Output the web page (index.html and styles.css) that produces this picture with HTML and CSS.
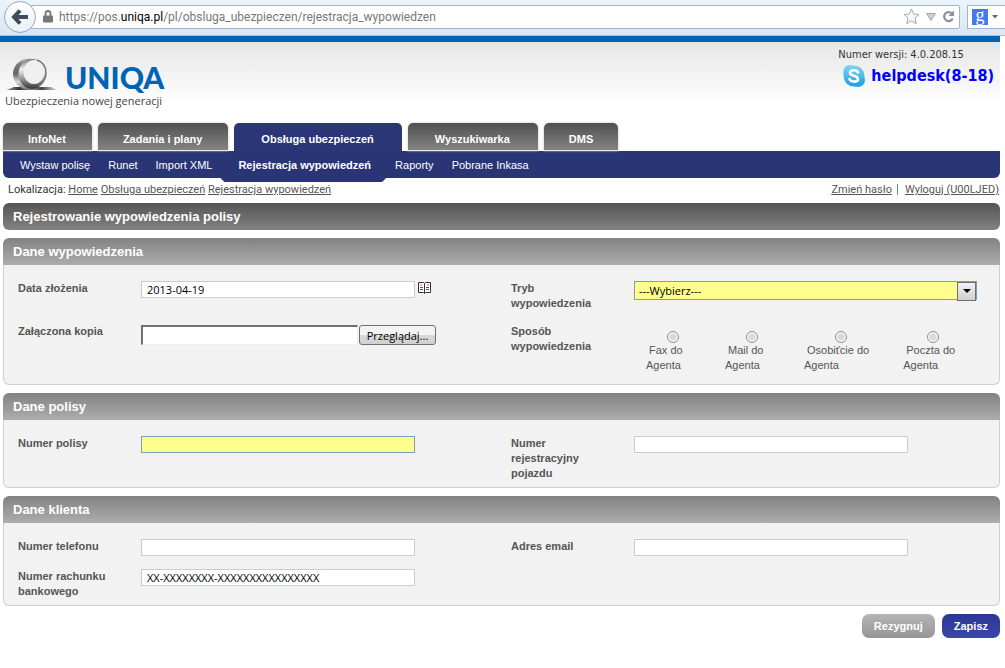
FILE: index.html
```html
<!DOCTYPE html>
<html lang="pl">
<head>
<meta charset="utf-8">
<title>UNIQA - Rejestracja wypowiedzeń</title>
<link rel="stylesheet" href="styles.css">
</head>
<body>
<div class="toolbar">
  <button class="back" type="button" aria-label="Wstecz">
    <svg width="18" height="18" viewBox="0 0 18 18"><path d="M9 2.500 L3 9 L9 15.500 M3 9 H17" fill="none" stroke="#3f4d5e" stroke-width="4"/></svg>
  </button>
  <div class="urlbar">
    <svg class="lock" width="10" height="13" viewBox="0 0 10 13"><path d="M2.500 6 V3.500 A2.500 2.500 0 0 1 7.500 3.500 V6" fill="none" stroke="#777" stroke-width="1.800"/><rect x="0" y="5.500" width="10" height="7" rx="1" fill="#777"/></svg>
    <span class="url">https://pos.<b>uniqa.pl</b>/pl/obsluga_ubezpieczen/rejestracja_wypowiedzen</span>
    <svg width="17" height="17" viewBox="0 0 17 17"><path d="M8.500 1 L10.700 6 L16 6.500 L12 10.200 L13.200 15.700 L8.500 12.900 L3.800 15.700 L5 10.200 L1 6.500 L6.300 6 Z" fill="#f6f7f8" stroke="#a3a9af"/></svg>
    <svg width="10" height="8" viewBox="0 0 10 8"><path d="M.5 .5 H9.500 L5 7.500 Z" fill="#cdd2d8" stroke="#a3abb5"/></svg>
    <svg width="13" height="13" viewBox="0 0 13 13"><path d="M10 3.600 A4.500 4.500 0 1 0 10.700 8.500" fill="none" stroke="#87919d" stroke-width="2.200"/><path d="M12 .5 V6 H6.500 Z" fill="#87919d"/></svg>
  </div>
  <div class="search">
    <span class="google">g</span>
    <svg width="6" height="4" viewBox="0 0 6 4"><path d="M0 0 H6 L3 3.500 Z" fill="#666"/></svg>
  </div>
</div>

<div class="page">
  <header class="header">
    <div class="brand">
      <div class="brand-row">
        <svg width="53" height="34" viewBox="0 0 53 34">
          <defs>
            <linearGradient id="band" x1="0" y1="0" x2="0" y2="1"><stop offset="0" stop-color="#bbb"/><stop offset=".2" stop-color="#777"/><stop offset=".5" stop-color="#666"/><stop offset=".75" stop-color="#d8d8d8"/><stop offset="1" stop-color="#777"/></linearGradient>
            <linearGradient id="inner" x1="0" y1="0" x2="0" y2="1"><stop offset="0" stop-color="#777"/><stop offset=".35" stop-color="#eee"/><stop offset=".65" stop-color="#999"/><stop offset="1" stop-color="#333"/></linearGradient>
            <linearGradient id="base" x1="0" y1="0" x2="1" y2="0"><stop offset="0" stop-color="#aaa"/><stop offset=".25" stop-color="#333"/><stop offset=".5" stop-color="#888"/><stop offset=".7" stop-color="#444"/><stop offset="1" stop-color="#ddd"/></linearGradient>
          </defs>
          <path d="M1 32 L9 29 H46 L52 32 Z" fill="url(#base)"/>
          <ellipse cx="24" cy="16" rx="16" ry="15.500" fill="url(#band)"/>
          <ellipse cx="27" cy="16" rx="13.500" ry="15" fill="url(#inner)"/>
          <ellipse cx="29" cy="14" rx="10.500" ry="12" fill="#efefef"/>
          <path d="M32 2 C38 4 41 9 41 15 C41 20 38 25 34 28" fill="none" stroke="#777" stroke-width="1.500"/>
        </svg>
        <strong class="logo">UNIQA</strong>
      </div>
      <div class="tagline">Ubezpieczenia nowej generacji</div>
    </div>
    <div class="support">
      <div class="version">Numer wersji: 4.0.208.15</div>
      <a class="helpdesk" href="#">
        <svg width="24" height="24" viewBox="0 0 24 24"><defs><linearGradient id="sky" x1="0" y1="0" x2="0" y2="1"><stop offset="0" stop-color="#7fd6f5"/><stop offset="1" stop-color="#1a9fdc"/></linearGradient></defs><circle cx="8" cy="8" r="7" fill="#74cff2"/><circle cx="16" cy="16" r="7" fill="#2aa8e0"/><circle cx="12" cy="12" r="10.500" fill="url(#sky)"/><path d="M16 8.500 C15 5.500 8 5.500 8 9 C8 12.500 16 11 16 15 C16 18.500 8.500 18.500 7.500 15" fill="none" stroke="#fff" stroke-width="2.600" stroke-linecap="round"/></svg>
        <span>helpdesk(8-18)</span>
      </a>
    </div>
  </header>

  <nav class="tabs">
    <a href="#">InfoNet</a>
    <a href="#">Zadania i plany</a>
    <a href="#" class="wide active">Obsługa ubezpieczeń</a>
    <a href="#" class="wide">Wyszukiwarka</a>
    <a href="#">DMS</a>
  </nav>
  <nav class="subnav">
    <a href="#">Wystaw polisę</a>
    <a href="#">Runet</a>
    <a href="#">Import XML</a>
    <a href="#" class="active">Rejestracja wypowiedzeń</a>
    <a href="#">Raporty</a>
    <a href="#">Pobrane Inkasa</a>
  </nav>

  <div class="location">
    <div>Lokalizacja: <a href="#">Home</a> <a href="#">Obsługa ubezpieczeń</a> <a href="#">Rejestracja wypowiedzeń</a></div>
    <div class="account"><a href="#">Zmień hasło</a><span class="bar"></span><a href="#">Wyloguj (U00LJED)</a></div>
  </div>

  <form class="form">
    <h1 class="title">Rejestrowanie wypowiedzenia polisy</h1>

    <section class="panel">
      <h2>Dane wypowiedzenia</h2>
      <div class="fields">
        <div class="field">
          <label for="date">Data złożenia</label>
          <div class="control">
            <input class="text" id="date" type="text" value="2013-04-19">
            <svg width="13" height="14" viewBox="0 0 13 14"><path d="M.5 1.500 H5.500 L6.500 2.500 L7.500 1.500 H12.500 V11.500 H7.500 L6.500 12.500 L5.500 11.500 H.5 Z M6.500 2.500 V12" fill="#fff" stroke="#333"/><path d="M2 6.500 H5 M2 8.500 H5 M8 6.500 H11 M8 8.500 H11" stroke="#555"/><path d="M2 4 H4 M9 4 H11" stroke="#e0602a"/></svg>
          </div>
        </div>
        <div class="field">
          <label for="mode">Tryb wypowiedzenia</label>
          <div class="control"><div class="select"><select id="mode"><option>---Wybierz---</option></select></div></div>
        </div>
        <div class="field">
          <label for="copy">Załączona kopia</label>
          <div class="control file"><input id="copy" type="text"><button type="button">Przeglądaj...</button></div>
        </div>
        <div class="field">
          <span class="label" id="way">Sposób wypowiedzenia</span>
          <div class="radios" role="radiogroup" aria-labelledby="way">
            <label><input type="radio" name="way"><span>Fax do<br>Agenta</span></label>
            <label><input type="radio" name="way"><span>Mail do<br>Agenta</span></label>
            <label><input type="radio" name="way"><span>Osobiťcie do<br>Agenta</span></label>
            <label><input type="radio" name="way"><span>Poczta do<br>Agenta</span></label>
          </div>
        </div>
      </div>
    </section>

    <section class="panel">
      <h2>Dane polisy</h2>
      <div class="fields">
        <div class="field">
          <label for="policy">Numer polisy</label>
          <div class="control"><input class="text required" id="policy" type="text"></div>
        </div>
        <div class="field">
          <label for="plate">Numer rejestracyjny pojazdu</label>
          <div class="control"><input class="text" id="plate" type="text"></div>
        </div>
      </div>
    </section>

    <section class="panel">
      <h2>Dane klienta</h2>
      <div class="fields">
        <div class="field">
          <label for="phone">Numer telefonu</label>
          <div class="control"><input class="text" id="phone" type="text"></div>
        </div>
        <div class="field">
          <label for="email">Adres email</label>
          <div class="control"><input class="text" id="email" type="text"></div>
        </div>
        <div class="field">
          <label for="account">Numer rachunku bankowego</label>
          <div class="control"><input class="text" id="account" type="text" value="XX-XXXXXXXX-XXXXXXXXXXXXXXXX"></div>
        </div>
      </div>
    </section>

    <div class="actions">
      <button type="button" class="cancel">Rezygnuj</button>
      <button type="button" class="save">Zapisz</button>
    </div>
  </form>
</div>
</body>
</html>
```
FILE: styles.css
```css
* { box-sizing: border-box; }
body {
  margin: 0;
  background: #fff;
  color: #333;
  font: 11px/15px "Liberation Sans", Arial, sans-serif;
  overflow-x: hidden;
}
svg { display: block; flex: none; }

.toolbar {
  display: flex;
  align-items: center;
  height: 36px;
  padding: 0 0 2px 4px;
  background: linear-gradient(#ecf4fd, #d9e6f5);
  border-bottom: 1px solid #b5bfca;
  overflow: hidden;
}
.back {
  display: flex;
  align-items: center;
  justify-content: center;
  flex: none;
  z-index: 1;
  width: 32px;
  height: 32px;
  padding: 0;
  border: 1px solid #9aa9bc;
  border-radius: 50%;
  background: linear-gradient(#fff, #e9f0f8);
}
.urlbar {
  display: flex;
  align-items: center;
  flex: 1;
  gap: 6px;
  height: 24px;
  margin-left: -6px;
  padding: 0 4px 0 12px;
  border: 1px solid #a3b4c9;
  border-radius: 2px;
  background: #fff;
}
.url {
  flex: 1;
  font: 12px/16px Roboto, sans-serif;
  color: #777;
  white-space: nowrap;
}
.url b { font-weight: 400; color: #000; }
.search {
  display: flex;
  align-items: center;
  flex: none;
  gap: 4px;
  width: 38px;
  height: 24px;
  margin-left: 7px;
  padding-left: 4px;
  border: 1px solid #a3b4c9;
  border-right: 0;
  background: #fff;
}
.google {
  width: 16px;
  height: 16px;
  background: #4778ee;
  color: #fff;
  font: 18px/12px "Liberation Serif", serif;
  text-align: center;
}

.page { margin-right: 5px; }
.header {
  display: flex;
  justify-content: space-between;
  height: 87px;
  padding: 6px 6px 0 5px;
  border-top: 6px solid #0064b4;
  background: linear-gradient(#e6e6e6, #fff 62px);
}
.brand { padding-top: 9px; }
.brand-row { display: flex; align-items: flex-end; gap: 7px; height: 35px; }
.logo {
  color: #0064b4;
  font: 900 30px/30px Lato, sans-serif;
}
.tagline { padding-top: 1px; font: 11px/16px "Open Sans", sans-serif; color: #444; }
.version {
  font: 11px/14px "DejaVu Sans Condensed", "DejaVu Sans", sans-serif;
}
.helpdesk {
  display: flex;
  align-items: center;
  gap: 5px;
  padding: 2px 0 0 4px;
  color: #00f;
  font: bold 16px/24px "DejaVu Sans Condensed", "DejaVu Sans", sans-serif;
  text-decoration: none;
}

.tabs { display: flex; gap: 6px; padding: 0 3px; height: 28px; }
.tabs a {
  height: 27px;
  padding: 0 25px;
  border-radius: 5px 5px 0 0;
  background: linear-gradient(#505050, #848484);
  box-shadow: 0 0 2px 1px #e4e4e4;
  color: #fff;
  font-weight: bold;
  line-height: 32px;
  text-decoration: none;
}
.tabs a:nth-child(-n+2) { padding-right: 26px; }
.tabs .wide { padding: 0 28px 0 27px; }
.tabs .active { height: 28px; background: #2a3676; box-shadow: none; }
.subnav {
  display: flex;
  gap: 18px;
  height: 27px;
  margin-left: 3px;
  padding: 0 17px;
  border-radius: 0 0 6px 6px;
  background: #293575;
}
.subnav a { color: #fff; line-height: 28px; text-decoration: none; }
.subnav .active { position: relative; margin: 0 6px 0 8px; font-weight: bold; }
.subnav .active::after {
  content: "";
  position: absolute;
  top: 27px;
  left: -18px;
  right: -15px;
  height: 4px;
  background: #293575;
  clip-path: polygon(0 0, 100% 0, calc(100% - 4px) 100%, 4px 100%);
}

.location {
  display: flex;
  justify-content: space-between;
  padding: 4px 1px 6px 8px;
  font-family: Roboto, sans-serif;
}
.location a { color: #555; }
.account { display: flex; align-items: center; }
.bar { width: 1px; height: 11px; margin: 0 7px 0 5px; background: #4b8fd0; }

.form { display: flex; flex-direction: column; gap: 8px; margin-left: 3px; }
.title, .panel h2 {
  margin: 0;
  padding: 0 10px;
  color: #fff;
  font-size: 13px;
  font-weight: bold;
  line-height: 27px;
}
.title { border-radius: 6px; background: linear-gradient(#555, #828282); }
.panel h2 { border-radius: 6px 6px 0 0; background: linear-gradient(#828282, #adadad); }
.fields {
  display: grid;
  grid-template-columns: 1fr 1fr;
  gap: 13px 5px;
  padding: 16px 0 6px 14px;
  border: 1px solid #cfcfcf;
  border-top: 0;
  border-radius: 0 0 6px 6px;
  background: #f2f2f2;
}
.field { display: grid; grid-template-columns: 90px 1fr; column-gap: 33px; color: #555; }
.field > label, .label { font-weight: bold; }
.control { display: flex; align-items: flex-start; gap: 3px; }
input, select, button { font: 11px "Open Sans", sans-serif; margin: 0; }
.text {
  width: 75%;
  height: 17px;
  padding: 0 5px;
  border: 1px solid #ccc;
  background: #fff;
  color: #000;
}
.required { border-color: #7f9db9; background: #ffff8c; }
.select { position: relative; width: 94%; }
.select select {
  display: block;
  width: 100%;
  height: 19px;
  padding: 0 20px 0 4px;
  border: 1px solid #7f9db9;
  border-radius: 0;
  background: #ffff8c;
  color: #000;
  appearance: none;
}
.select::before {
  content: "";
  position: absolute;
  top: 1px;
  right: 1px;
  width: 17px;
  height: 17px;
  border: 1px solid #707070;
  background: linear-gradient(#f2f2f2, #cfcfcf);
  pointer-events: none;
}
.select::after {
  content: "";
  position: absolute;
  top: 8px;
  right: 6px;
  border: 4px solid transparent;
  border-top-color: #000;
  border-bottom: 0;
  pointer-events: none;
}
.file { padding-top: 1px; gap: 1px; }
.file input {
  width: 217px;
  height: 20px;
  padding: 0 4px;
  border: 1px solid #eee;
  border-top: 2px solid #707070;
  border-left: 2px solid #707070;
}
.file button {
  width: 77px;
  height: 20px;
  padding: 0;
  border: 1px solid #707070;
  border-radius: 3px;
  background: linear-gradient(#f3f3f3 50%, #d8d8d8 50%, #d0d0d0);
  color: #000;
}
.radios { display: flex; gap: 26px; padding: 7px 0 5px 12px; }
.radios label { display: flex; flex-direction: column; min-width: 53px; padding-right: 8px; }
.radios span { text-indent: 3px; white-space: nowrap; }
.radios input {
  appearance: none;
  align-self: center;
  width: 12px;
  height: 12px;
  margin-left: 8px;
  border: 1px solid #909090;
  border-radius: 50%;
  background: radial-gradient(#d8dade 40%, #f6f6f6 60%);
}
.actions { display: flex; justify-content: flex-end; gap: 7px; }
.actions button {
  height: 24px;
  padding: 0 12px;
  border: 0;
  border-radius: 7px;
  color: #fff;
  font: bold 11px "Liberation Sans", Arial, sans-serif;
}
.cancel { background: linear-gradient(#b5b5b5, #969696); }
.save { background: linear-gradient(#2c3794, #3a46ab); }
```
